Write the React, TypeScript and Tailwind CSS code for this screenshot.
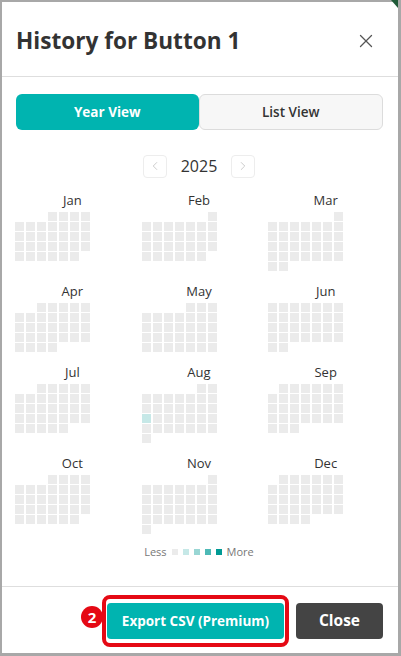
import React from "react";
import { X, ChevronLeft, ChevronRight } from "lucide-react";

const MONTHS = ["Jan", "Feb", "Mar", "Apr", "May", "Jun", "Jul", "Aug", "Sep", "Oct", "Nov", "Dec"];
const YEAR = 2025;

// the only day with activity in the reference
const activity: Record<string, number> = { "7-17": 1 };

const levelColor = (level: number) => {
  if (level === 1) return "bg-[#c6e8e7]";
  if (level === 2) return "bg-[#99d6d4]";
  if (level === 3) return "bg-[#4db9b6]";
  if (level === 4) return "bg-[#009a94]";
  return "bg-[#ebebeb]";
};

const MonthGrid = ({ month }: { month: number }) => {
  const offset = new Date(YEAR, month, 1).getDay();
  const days = new Date(YEAR, month + 1, 0).getDate();

  return (
    <div className="flex flex-col">
      <div className="text-center text-[13px] leading-[20px] text-[#333]">{MONTHS[month]}</div>
      <div className="mt-[2px] grid grid-cols-[repeat(7,9px)] gap-x-[2px] gap-y-[1px]">
        {Array.from({ length: offset }).map((_, i) => (
          <div key={"e" + i} className="h-[9px] w-[9px]" />
        ))}
        {Array.from({ length: days }).map((_, i) => (
          <div
            key={i}
            className={`h-[9px] w-[9px] ${levelColor(activity[`${month}-${i + 1}`] ?? 0)}`}
          />
        ))}
      </div>
    </div>
  );
};

export default function App() {
  return (
    <div className="relative flex h-[656px] w-[401px] flex-col border-b-[3px] border-l-2 border-r-[3px] border-t-2 border-[#a8a8a8] bg-white font-['Open_Sans',sans-serif]">
      {/* header */}
      <div className="flex h-[75px] items-center justify-between border-b border-[#dedede] pl-[14px] pr-[21px] pt-[3px]">
        <h2 className="text-[22.6px] font-bold text-[#333]">History for Button 1</h2>
        <X className="h-[22px] w-[22px] text-[#555]" strokeWidth={1.4} />
      </div>

      <div className="flex flex-1 flex-col pl-[13px] pr-[15px] pt-[17px]">
        {/* view switch */}
        <div className="ml-[1px] flex h-[36px]">
          <button className="flex-1 rounded-[6px] bg-[#00b4b0] text-[13.5px] font-bold text-white">
            Year View
          </button>
          <button className="flex-1 rounded-[6px] border border-[#dcdcdc] bg-[#f7f7f7] text-[13.5px] font-semibold text-[#333]">
            List View
          </button>
        </div>

        {/* year nav */}
        <div className="mt-[24px] flex items-center justify-center gap-[14px]">
          <button className="flex h-[23px] w-[24px] items-center justify-center rounded-[4px] border border-[#ededed]">
            <ChevronLeft className="h-[14px] w-[14px] text-[#bbb]" strokeWidth={1.3} />
          </button>
          <span className="text-[16px] font-medium text-[#333]">2025</span>
          <button className="flex h-[23px] w-[24px] items-center justify-center rounded-[4px] border border-[#ededed]">
            <ChevronRight className="h-[14px] w-[14px] text-[#bbb]" strokeWidth={1.3} />
          </button>
        </div>

        {/* calendars */}
        <div className="mt-[12px] grid grid-cols-3 gap-x-3 gap-y-[10px]">
          {MONTHS.map((_, m) => (
            <MonthGrid key={m} month={m} />
          ))}
        </div>

        {/* legend */}
        <div className="mt-[10px] flex items-center justify-center gap-[5px] text-[11px] text-[#777]">
          <span>Less</span>
          {[0, 1, 2, 3, 4].map((l) => (
            <span key={l} className={`h-[6px] w-[6px] ${levelColor(l)}`} />
          ))}
          <span>More</span>
        </div>
      </div>

      {/* footer */}
      <div className="flex h-[67px] items-start justify-end gap-3 border-t border-[#dedede] pr-[15px] pt-[16px]">
        <div className="relative">
          <span className="absolute -left-[26px] top-[3px] flex h-[22px] w-[22px] items-center justify-center rounded-full bg-[#e50914] text-[15px] font-bold text-white">
            2
          </span>
          <span className="pointer-events-none absolute -bottom-[8px] -left-[5px] -right-[5px] -top-[8px] rounded-[8px] border-4 border-[#e50914]" />
          <button className="h-[36px] w-[177px] rounded-[4px] bg-[#00b4b0] text-[13.5px] font-bold text-white">
            Export CSV (Premium)
          </button>
        </div>
        <button className="h-[36px] w-[87px] rounded-[4px] bg-[#444] text-[15.5px] font-bold text-white">
          Close
        </button>
      </div>

      <svg className="absolute -top-[2px] right-0 h-[8px] w-[7px]" viewBox="0 0 7 8">
        <polygon points="0,0 7,0 7,8" fill="#1f5a38" />
      </svg>
    </div>
  );
}
